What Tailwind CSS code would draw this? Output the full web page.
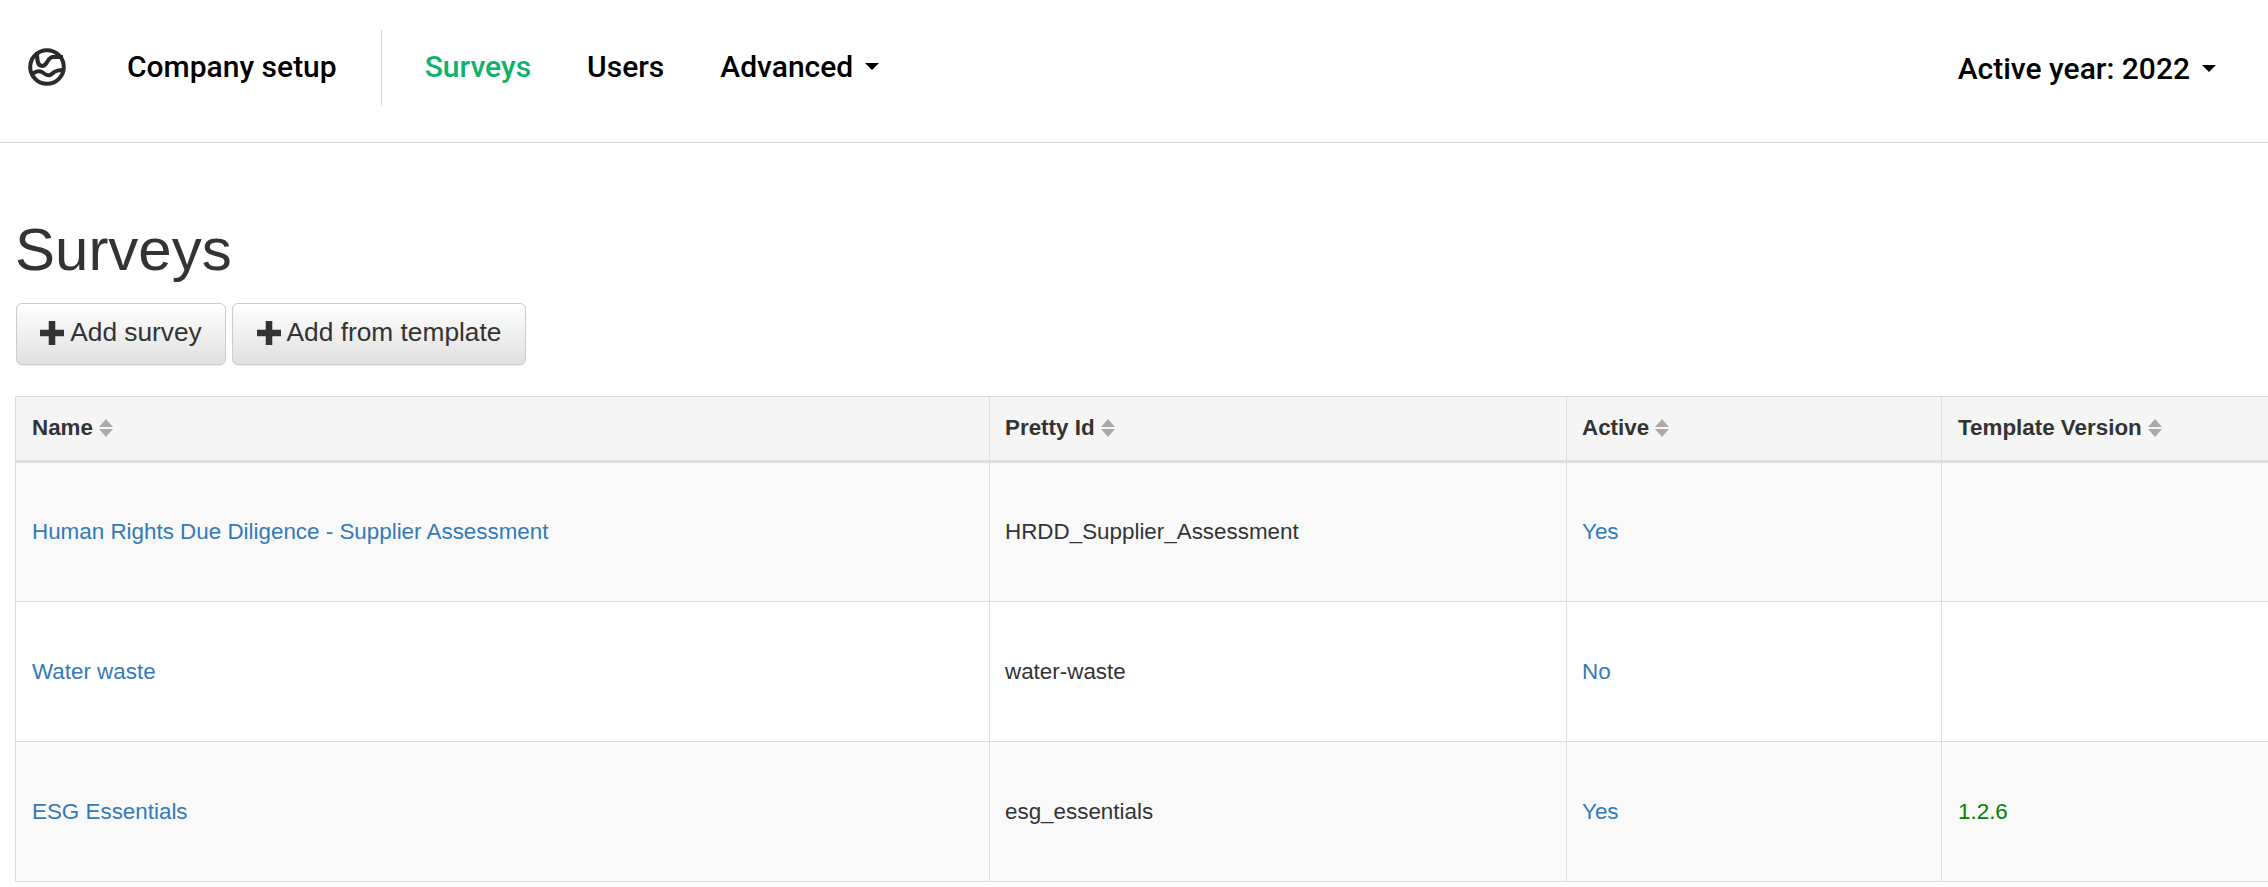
<!DOCTYPE html>
<html>
<head>
<meta charset="utf-8">
<script src="https://cdn.jsdelivr.net/npm/@tailwindcss/browser@4"></script>
</head>
<body class="bg-white overflow-hidden font-['Liberation_Sans',sans-serif] text-[22.4px] text-[#333]">
<nav class="h-[143px] border-b border-[#d4d4d4] flex items-center pb-[10px] font-['Roboto',sans-serif] font-medium text-[30px] text-black">
  <svg class="w-[38px] h-[38px] ml-[28px] mr-[61px] mt-[10px] -translate-y-[4px]" viewBox="0 0 38 38" fill="none" stroke="#2b2b2b" stroke-width="4">
    <circle cx="19" cy="19" r="16.8"/>
    <path d="M9 4 C9 11 9 18 14 18 C20 18 19 9 25 9 C29 9 32 9 35 9"/>
    <path d="M3 27 C7 24 10 22 14 24 C18 27 21 29 25 25 C28 22 32 22 36 22"/>
  </svg>
  <span>Company setup</span>
  <div class="w-px h-[75px] bg-[#d4d4d4] ml-[44px] mr-[43px] mt-[10px] -translate-y-[4px]"></div>
  <span class="text-[#0db26b]">Surveys</span>
  <span class="ml-[56px]">Users</span>
  <span class="ml-[56px]">Advanced</span>
  <span class="ml-[12px] w-0 h-0 border-x-[7px] border-x-transparent border-t-[7px] border-t-black"></span>
  <div class="ml-auto flex items-center pr-[52px] pt-[4px]">
    <span>Active year: 2022</span>
    <span class="ml-[12px] w-0 h-0 border-x-[7px] border-x-transparent border-t-[7px] border-t-black"></span>
  </div>
</nav>
<main class="pl-[15px]">
  <h1 class="text-[60px] leading-[65px] mt-[74px] font-normal">Surveys</h1>
  <div class="flex gap-[6px] mt-[21px] ml-px">
    <button class="h-[62px] w-[210px] flex items-center justify-center gap-[6px] pb-[2px] rounded-[6px] border border-[#ccc] bg-gradient-to-b from-white to-[#e0e0e0] shadow-[0_1px_1px_rgba(0,0,0,0.08)] text-[#333] text-[26.3px]">
      <svg class="w-[24px] h-[24px]" viewBox="0 0 22 22" fill="#333"><path d="M8 0h6v8h8v6h-8v8H8v-8H0V8h8z"/></svg><span>Add survey</span>
    </button>
    <button class="h-[62px] w-[294px] flex items-center justify-center gap-[6px] pb-[2px] rounded-[6px] border border-[#ccc] bg-gradient-to-b from-white to-[#e0e0e0] shadow-[0_1px_1px_rgba(0,0,0,0.08)] text-[#333] text-[26.3px]">
      <svg class="w-[24px] h-[24px]" viewBox="0 0 22 22" fill="#333"><path d="M8 0h6v8h8v6h-8v8H8v-8H0V8h8z"/></svg><span>Add from template</span>
    </button>
  </div>
  <table class="mt-[31px] table-fixed border-collapse w-[2300px] border border-[#ddd]">
    <colgroup><col class="w-[974px]"><col class="w-[577px]"><col class="w-[375px]"><col></colgroup>
    <thead class="bg-[#f5f5f5] font-bold">
      <tr class="h-[65px]">
        <th class="border border-[#ddd] border-b-[3px] pl-[16px] pr-[15px] pb-[2px] text-left">Name<svg class="inline w-[14px] h-[18px] ml-[6px] align-[-2px]" viewBox="0 0 14 18" fill="#aaa"><path d="M7 0 L14 8 H0Z M0 10 H14 L7 18Z"/></svg></th>
        <th class="border border-[#ddd] border-b-[3px] px-[15px] pb-[2px] text-left">Pretty Id<svg class="inline w-[14px] h-[18px] ml-[6px] align-[-2px]" viewBox="0 0 14 18" fill="#aaa"><path d="M7 0 L14 8 H0Z M0 10 H14 L7 18Z"/></svg></th>
        <th class="border border-[#ddd] border-b-[3px] px-[15px] pb-[2px] text-left">Active<svg class="inline w-[14px] h-[18px] ml-[6px] align-[-2px]" viewBox="0 0 14 18" fill="#aaa"><path d="M7 0 L14 8 H0Z M0 10 H14 L7 18Z"/></svg></th>
        <th class="border border-[#ddd] border-b-[3px] pl-[16px] pr-[15px] pb-[2px] text-left">Template Version<svg class="inline w-[14px] h-[18px] ml-[6px] align-[-2px]" viewBox="0 0 14 18" fill="#aaa"><path d="M7 0 L14 8 H0Z M0 10 H14 L7 18Z"/></svg></th>
      </tr>
    </thead>
    <tbody>
      <tr class="h-[140px] bg-[#f9f9f9]">
        <td class="border border-[#ddd] pl-[16px] pr-[15px] text-[#337ab7]">Human Rights Due Diligence - Supplier Assessment</td>
        <td class="border border-[#ddd] px-[15px]">HRDD_Supplier_Assessment</td>
        <td class="border border-[#ddd] px-[15px] text-[#337ab7]">Yes</td>
        <td class="border border-[#ddd] pl-[16px] pr-[15px]"></td>
      </tr>
      <tr class="h-[140px] bg-white">
        <td class="border border-[#ddd] pl-[16px] pr-[15px] text-[#337ab7]">Water waste</td>
        <td class="border border-[#ddd] px-[15px]">water-waste</td>
        <td class="border border-[#ddd] px-[15px] text-[#337ab7]">No</td>
        <td class="border border-[#ddd] pl-[16px] pr-[15px]"></td>
      </tr>
      <tr class="h-[140px] bg-[#f9f9f9]">
        <td class="border border-[#ddd] pl-[16px] pr-[15px] text-[#337ab7]">ESG Essentials</td>
        <td class="border border-[#ddd] px-[15px]">esg_essentials</td>
        <td class="border border-[#ddd] px-[15px] text-[#337ab7]">Yes</td>
        <td class="border border-[#ddd] pl-[16px] pr-[15px] text-[#008000]">1.2.6</td>
      </tr>
    </tbody>
  </table>
</main>
</body>
</html>
